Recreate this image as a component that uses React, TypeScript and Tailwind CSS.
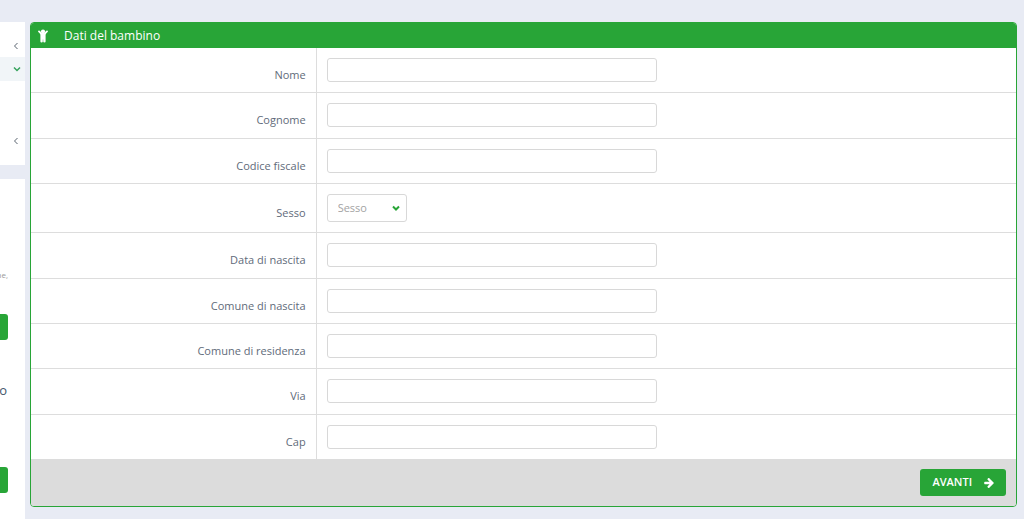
type Field = {
  id: string;
  label: string;
};

const before: Field[] = [
  { id: "nome", label: "Nome" },
  { id: "cognome", label: "Cognome" },
  { id: "codice", label: "Codice fiscale" },
];

const after: Field[] = [
  { id: "data", label: "Data di nascita" },
  { id: "comune-nascita", label: "Comune di nascita" },
  { id: "comune-residenza", label: "Comune di residenza" },
  { id: "via", label: "Via" },
  { id: "cap", label: "Cap" },
];

function Chevron({ className }: { className: string }) {
  return (
    <svg viewBox="0 0 8 8" fill="none" stroke="currentColor" className={className}>
      <path d="M1 2.5 L4 5.5 L7 2.5" />
    </svg>
  );
}

function ChildIcon({ className }: { className: string }) {
  return (
    <svg viewBox="0 0 10 14" fill="currentColor" className={className}>
      <circle cx="5" cy="2.6" r="2.1" />
      <path
        d="M1 2.4 L3.6 5 H6.4 L9 2.4"
        fill="none"
        stroke="currentColor"
        strokeWidth="1.8"
        strokeLinecap="round"
        strokeLinejoin="round"
      />
      <path d="M2.4 4.6 H7.6 V12.6 Q7.6 13.5 6.5 13.5 Q5.2 13.5 5.2 12.6 V10.5 H4.8 V12.6 Q4.8 13.5 3.5 13.5 Q2.4 13.5 2.4 12.6 Z" />
    </svg>
  );
}

function ArrowIcon({ className }: { className: string }) {
  return (
    <svg viewBox="0 0 1472 1536" fill="currentColor" className={className}>
      <path d="M1472 768q0 54-37 91l-651 651q-39 37-91 37-51 0-90-37l-75-75q-38-38-38-91t38-91l293-293H117q-52 0-84.500-37.500T0 832V704q0-53 32.500-90.500T117 576h704L528 282q-38-36-38-90t38-90l75-75q38-38 90-38 53 0 91 38l651 651q37 35 37 90z" />
    </svg>
  );
}

function Row({ id, label, children }: Field & { children: React.ReactNode }) {
  return (
    <div className="flex grow border-b border-[#dddddd] last:border-b-0">
      <div className="flex w-[29%] shrink-0 items-center justify-end border-r border-[#dddddd] pt-2.5 pr-2.5">
        <label htmlFor={id} className="text-[11px] leading-[18px] text-[#5f6b7a]">
          {label}
        </label>
      </div>
      <div className="flex-1 p-2.5">{children}</div>
    </div>
  );
}

function TextRow({ id, label }: Field) {
  return (
    <Row id={id} label={label}>
      <input
        id={id}
        type="text"
        className="block h-6 w-full max-w-[330px] rounded-[3px] border border-[#d8d8d8] bg-white px-2 text-[11px] outline-none"
      />
    </Row>
  );
}

function Sidebar() {
  return (
    <aside className="flex w-[25px] shrink-0 flex-col gap-3.5 overflow-hidden pt-[22px]">
      <nav className="h-[143px] bg-white pt-3">
        <a href="#" aria-label="Apri menu" className="flex h-[23px] items-center justify-end pr-[5px]">
          <Chevron className="size-2 rotate-90 text-[#59636f]" />
        </a>
        <a href="#" aria-label="Chiudi menu" className="flex h-6 items-center justify-end bg-[#f1f5f8] pr-1">
          <Chevron className="size-2 stroke-[1.5] text-[#36a35c]" />
        </a>
        <a href="#" aria-label="Apri menu" className="mt-12 flex h-[23px] items-center justify-end pr-[5px]">
          <Chevron className="size-2 rotate-90 text-[#59636f]" />
        </a>
      </nav>
      <div className="flex grow flex-col bg-white pt-[88px]">
        <p className="flex h-4 w-2 justify-end text-[8px] leading-4 text-[#999999]">ne,</p>
        <button type="button" aria-label="Apri" className="mt-[31px] h-[26px] w-2 rounded-r-[3px] bg-[#28a537]" />
        <p className="mt-10 flex h-5 w-[7px] justify-end text-[13px] leading-5 text-[#44566b]">o</p>
        <button type="button" aria-label="Apri" className="mt-[67px] h-[26px] w-2 rounded-r-[3px] bg-[#28a537]" />
      </div>
    </aside>
  );
}

function App() {
  return (
    <div className="flex min-h-screen bg-[#e8ebf4] font-['Open_Sans',sans-serif]">
      <Sidebar />
      <main className="flex-1 pt-[22px] pr-[7px] pb-3 pl-[5px]">
        <form className="overflow-hidden rounded-[4px] border border-[#28a537] bg-white">
          <h1 className="flex h-[25px] items-center gap-4 bg-[#28a537] pl-[7px] text-xs text-white">
            <ChildIcon className="h-3.5 w-2.5" />
            Dati del bambino
          </h1>
          <div className="flex min-h-[411px] flex-col">
            {before.map((f) => (
              <TextRow key={f.id} {...f} />
            ))}
            <Row id="sesso" label="Sesso">
              <div className="relative w-20">
                <select
                  id="sesso"
                  className="block h-7 w-full appearance-none rounded-[3px] border border-[#d8d8d8] bg-white pl-2.5 text-[11px] text-[#a3a3a3] outline-none"
                >
                  <option>Sesso</option>
                </select>
                <Chevron className="pointer-events-none absolute top-2.5 right-[7px] size-2 stroke-2 text-[#28a537]" />
              </div>
            </Row>
            {after.map((f) => (
              <TextRow key={f.id} {...f} />
            ))}
          </div>
          <div className="flex justify-end bg-[#dcdcdc] p-2.5">
            <button
              type="button"
              className="flex h-[27px] items-center gap-3 rounded-[3px] bg-[#28a537] px-3 text-[11px] font-semibold text-white"
            >
              AVANTI
              <ArrowIcon className="size-2.5" />
            </button>
          </div>
        </form>
      </main>
    </div>
  );
}

export default App;
